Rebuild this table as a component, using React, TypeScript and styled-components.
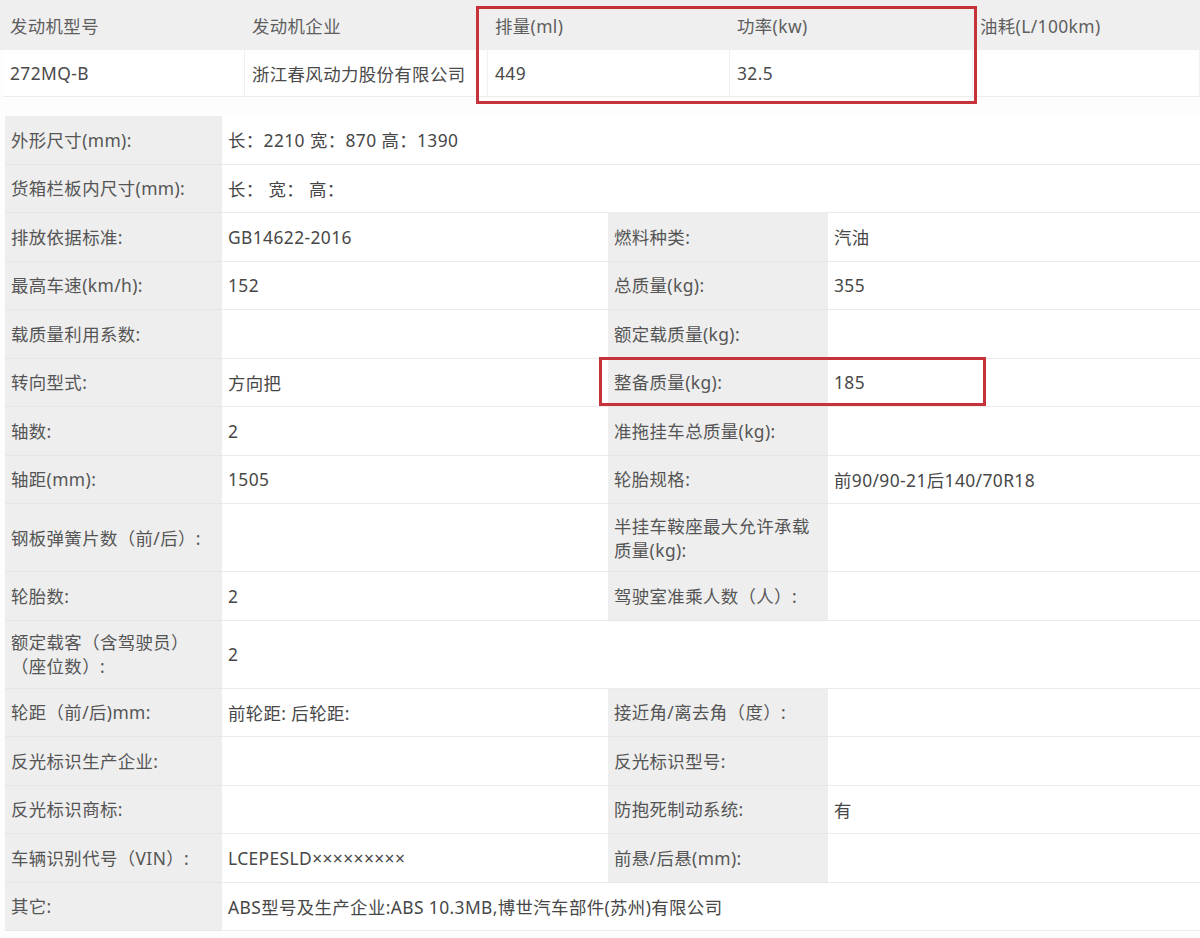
import React from "react";
import styled, { createGlobalStyle } from "styled-components";

const Global = createGlobalStyle`
  html, body { margin: 0; padding: 0; background: #ffffff; }
  body { font-family: "Noto Sans", "Noto Sans CJK SC", sans-serif; }
  * { box-sizing: border-box; }
`;

const Page = styled.div`
  position: relative;
  width: 1200px;
  height: 938px;
  overflow: hidden;
  background: #fdfdfd;
  color: #4a4a4a;
  font-size: 17.4px;
  letter-spacing: 0.4px;
`;

const EngineTable = styled.div`
  display: grid;
  grid-template-columns: 242px 243px 242px 243px 1fr;
  padding-left: 3px;
`;

const HeadCell = styled.div`
  height: 50px;
  display: flex;
  align-items: center;
  padding-left: 7px;
  background: #efefef;
  color: #5e5e5e;
  white-space: nowrap;
  &:first-child { margin-left: -3px; padding-left: 10px; }
`;

const DataCell = styled.div`
  height: 47px;
  display: flex;
  align-items: center;
  padding-left: 7px;
  background: #ffffff;
  border-right: 1px solid #f0f0f0;
  border-bottom: 1px solid #ececec;
  white-space: nowrap;
  &:first-of-type { border-left: 1px solid #ececec; }
`;

const SpecTable = styled.div`
  margin-top: 19px;
  margin-left: 5px;
  display: grid;
  grid-template-columns: 217px 386px 220px 1fr;
`;

const Label = styled.div<{ $tall?: boolean }>`
  min-height: ${(p) => (p.$tall ? 68 : 48.5)}px;
  display: flex;
  align-items: center;
  padding: 0 16px 0 6px;
  background: #eeeeee;
  color: #555555;
  line-height: 24px;
  border-bottom: 1px solid #e6e6e6;
`;

const Value = styled.div<{ $span?: boolean; $tall?: boolean }>`
  min-height: ${(p) => (p.$tall ? 68 : 48.5)}px;
  display: flex;
  align-items: center;
  padding-left: 6px;
  background: #ffffff;
  color: #474747;
  border-bottom: 1px solid #ebebeb;
  grid-column: ${(p) => (p.$span ? "span 3" : "auto")};
  white-space: nowrap;
`;

const Highlight = styled.div<{ $l: number; $t: number; $w: number; $h: number }>`
  position: absolute;
  left: ${(p) => p.$l}px;
  top: ${(p) => p.$t}px;
  width: ${(p) => p.$w}px;
  height: ${(p) => p.$h}px;
  border: 3px solid #c5323a;
  pointer-events: none;
`;

type Row =
  | { full: true; label: string; value: string; tall?: boolean }
  | { full?: false; l1: string; v1: string; l2: string; v2: string; tall?: boolean };

const rows: Row[] = [
  { full: true, label: "外形尺寸(mm):", value: "长：2210 宽：870 高：1390" },
  { full: true, label: "货箱栏板内尺寸(mm):", value: "长：  宽：  高：" },
  { l1: "排放依据标准:", v1: "GB14622-2016", l2: "燃料种类:", v2: "汽油" },
  { l1: "最高车速(km/h):", v1: "152", l2: "总质量(kg):", v2: "355" },
  { l1: "载质量利用系数:", v1: "", l2: "额定载质量(kg):", v2: "" },
  { l1: "转向型式:", v1: "方向把", l2: "整备质量(kg):", v2: "185" },
  { l1: "轴数:", v1: "2", l2: "准拖挂车总质量(kg):", v2: "" },
  { l1: "轴距(mm):", v1: "1505", l2: "轮胎规格:", v2: "前90/90-21后140/70R18" },
  { l1: "钢板弹簧片数（前/后）:", v1: "", l2: "半挂车鞍座最大允许承载质量(kg):", v2: "", tall: true },
  { l1: "轮胎数:", v1: "2", l2: "驾驶室准乘人数（人）:", v2: "" },
  { full: true, label: "额定载客（含驾驶员）（座位数）:", value: "2", tall: true },
  { l1: "轮距（前/后)mm:", v1: "前轮距: 后轮距:", l2: "接近角/离去角（度）:", v2: "" },
  { l1: "反光标识生产企业:", v1: "", l2: "反光标识型号:", v2: "" },
  { l1: "反光标识商标:", v1: "", l2: "防抱死制动系统:", v2: "有" },
  { l1: "车辆识别代号（VIN）:", v1: "LCEPESLD×××××××××", l2: "前悬/后悬(mm):", v2: "" },
  { full: true, label: "其它:", value: "ABS型号及生产企业:ABS 10.3MB,博世汽车部件(苏州)有限公司" },
];

const engineHead = ["发动机型号", "发动机企业", "排量(ml)", "功率(kw)", "油耗(L/100km)"];
const engineData = ["272MQ-B", "浙江春风动力股份有限公司", "449", "32.5", ""];

export default function App() {
  return (
    <Page>
      <Global />
      <EngineTable>
        {engineHead.map((h) => (
          <HeadCell key={h}>{h}</HeadCell>
        ))}
        {engineData.map((d, i) => (
          <DataCell key={i}>{d}</DataCell>
        ))}
      </EngineTable>
      <SpecTable>
        {rows.map((r, i) =>
          r.full ? (
            <React.Fragment key={i}>
              <Label $tall={r.tall}>{r.label}</Label>
              <Value $span $tall={r.tall}>{r.value}</Value>
            </React.Fragment>
          ) : (
            <React.Fragment key={i}>
              <Label $tall={r.tall}>{r.l1}</Label>
              <Value $tall={r.tall}>{r.v1}</Value>
              <Label $tall={r.tall}>{r.l2}</Label>
              <Value $tall={r.tall}>{r.v2}</Value>
            </React.Fragment>
          )
        )}
      </SpecTable>
      <Highlight $l={476} $t={6} $w={501} $h={98} />
      <Highlight $l={599} $t={357} $w={387} $h={49} />
    </Page>
  );
}
